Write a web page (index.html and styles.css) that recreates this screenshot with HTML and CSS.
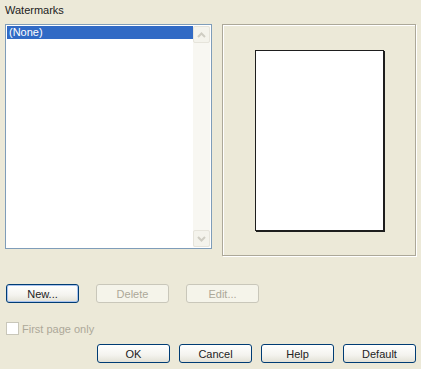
FILE: index.html
```html
<!DOCTYPE html>
<html lang="en">
<head>
    <meta charset="UTF-8">
    <title>Watermarks</title>
    <link rel="stylesheet" href="styles.css">
</head>
<body>
    <div class="dialog">
        <div class="caption">Watermarks</div>

        <div class="top">
            <div class="listbox">
                <ul class="items">
                    <li class="item selected">(None)</li>
                </ul>
                <div class="scrollbar">
                    <div class="arrow">
                        <svg width="9" height="6" viewBox="0 0 9 6"><path d="M1 5 L4.5 1.5 L8 5" fill="none" stroke="#cfcdc3" stroke-width="2"/></svg>
                    </div>
                    <div class="track"></div>
                    <div class="arrow">
                        <svg width="9" height="6" viewBox="0 0 9 6"><path d="M1 1 L4.5 4.5 L8 1" fill="none" stroke="#cfcdc3" stroke-width="2"/></svg>
                    </div>
                </div>
            </div>

            <div class="preview">
                <div class="page"></div>
            </div>
        </div>

        <div class="actions">
            <button class="btn default">New...</button>
            <button class="btn" disabled>Delete</button>
            <button class="btn" disabled>Edit...</button>
        </div>

        <label class="check">
            <span class="box"></span>
            <span>First page only</span>
        </label>

        <div class="footer">
            <button class="btn">OK</button>
            <button class="btn">Cancel</button>
            <button class="btn">Help</button>
            <button class="btn">Default</button>
        </div>
    </div>
</body>
</html>
```

FILE: styles.css
```css
* {
    margin: 0;
    padding: 0;
    box-sizing: border-box;
}

body {
    background-color: #ece9d8;
    font-family: 'Liberation Sans', Arial, sans-serif;
    font-size: 11px;
    color: #000;
    width: 421px;
    height: 369px;
    overflow: hidden;
}

.dialog {
    padding: 3px 5px 0 5px;
}

.caption {
    line-height: 14px;
    height: 14px;
    margin-bottom: 7px;
    color: #222;
}

.top {
    display: flex;
    align-items: flex-start;
}

/* list of watermarks */
.listbox {
    width: 207px;
    height: 225px;
    border: 1px solid #7f9db9;
    background: #fff;
    padding: 1px;
    display: flex;
}

.items {
    list-style: none;
    flex: 1;
}

.item {
    height: 13px;
    line-height: 13px;
    padding-left: 2px;
}

.item.selected {
    background-color: #316ac5;
    color: #fff;
}

.scrollbar {
    width: 17px;
    display: flex;
    flex-direction: column;
    background: #f8f7f2;
}

.arrow {
    height: 17px;
    border: 1px solid #e6e4db;
    border-radius: 2px;
    background: #f4f3ec;
    display: flex;
    align-items: center;
    justify-content: center;
}

.track {
    flex: 1;
}

/* preview frame */
.preview {
    margin-left: 10px;
    width: 194px;
    height: 232px;
    border: 1px solid #aca899;
    box-shadow: inset 1px 1px #fff, 1px 1px #fff;
    display: flex;
    align-items: center;
    justify-content: center;
}

.page {
    width: 129px;
    height: 181px;
    background: #fff;
    border: 1px solid #1e1e1e;
    box-shadow: 1px 1px #1e1e1e;
    margin-left: 1px;
}

/* buttons */
.btn {
    width: 73px;
    height: 19px;
    font: inherit;
    color: #222;
    border: 1px solid #003c74;
    border-radius: 3px;
    background: linear-gradient(to bottom, #ffffff 0%, #f4f3ee 60%, #e3e1d6 100%);
}

.btn.default {
    box-shadow: inset 0 0 0 1px #a9c3ee;
}

.btn:disabled {
    color: #aca899;
    border-color: #c9c7ba;
    background: #f5f4ea;
}

.actions {
    display: flex;
    gap: 17px;
    margin-top: 28px;
    padding-left: 1px;
}

.check {
    display: flex;
    align-items: center;
    gap: 3px;
    margin-top: 19px;
    padding-left: 1px;
    color: #aca899;
    height: 13px;
}

.check .box {
    width: 13px;
    height: 13px;
    border: 1px solid #c9c7ba;
    background: #fff;
}

.footer {
    display: flex;
    justify-content: flex-end;
    gap: 9px;
    margin-top: 9px;
}
```
